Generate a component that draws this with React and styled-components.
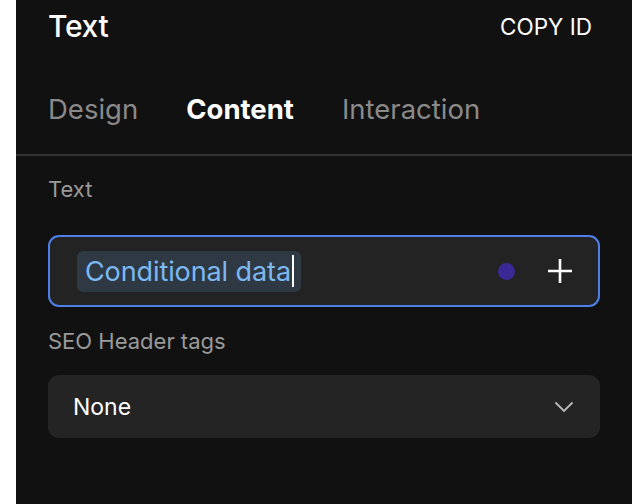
import React from 'react';
import styled, { createGlobalStyle } from 'styled-components';

const Global = createGlobalStyle`
  html, body { margin: 0; padding: 0; background: #ffffff; }
  body { font-family: Inter, "Noto Sans", sans-serif; }
`;

const Page = styled.div`
  display: flex;
  width: 632px;
  height: 504px;
  overflow: hidden;
`;

const Gutter = styled.div`
  width: 16px;
  flex-shrink: 0;
  background: #ffffff;
`;

const Panel = styled.div`
  flex: 1;
  background: #111111;
  display: flex;
  flex-direction: column;
`;

const Header = styled.div`
  display: flex;
  justify-content: space-between;
  align-items: center;
  padding: 4px 40px 0 32px;
  height: 44px;
`;

const Title = styled.h1`
  margin: 0;
  font-size: 30px;
  font-weight: 500;
  color: #ffffff;
  letter-spacing: -0.3px;
`;

const CopyButton = styled.button`
  background: none;
  border: none;
  padding: 0;
  font-family: inherit;
  font-size: 22.5px;
  font-weight: 400;
  color: #ffffff;
`;

const Tabs = styled.div`
  display: flex;
  gap: 48px;
  padding: 16px 32px 0 32px;
  height: 108px;
  align-items: center;
  border-bottom: 2px solid #333333;
  box-sizing: border-box;
`;

const Tab = styled.span`
  font-size: 27.5px;
  font-weight: ${p => (p.active ? 700 : 400)};
  color: ${p => (p.active ? '#ffffff' : '#8a8a8a')};
`;

const Body = styled.div`
  display: flex;
  flex-direction: column;
  padding: 20px 32px 0 32px;
`;

const Label = styled.div`
  font-size: 22px;
  color: #9a9a9a;
  line-height: 26px;
  margin-top: ${p => p.gap || 0}px;
`;

const InputBox = styled.div`
  margin-top: 33px;
  height: 72px;
  box-sizing: border-box;
  border: 2px solid #4f7fe8;
  border-radius: 11px;
  background: #232323;
  display: flex;
  align-items: center;
  padding: 0 24px 0 27px;
`;

const Chip = styled.span`
  display: inline-flex;
  align-items: center;
  height: 41px;
  padding: 0 7px 0 8px;
  border-radius: 6px;
  background: #2e3944;
  color: #7cb9f2;
  font-size: 27px;
  letter-spacing: -0.1px;
`;

const Caret = styled.span`
  width: 2px;
  height: 32px;
  background: #ffffff;
  margin-left: 1px;
`;

const Dot = styled.span`
  margin-left: auto;
  width: 17px;
  height: 17px;
  border-radius: 50%;
  background: #3b2996;
`;

const PlusIcon = styled.svg`
  margin-left: 31px;
  width: 28px;
  height: 28px;
`;

const SelectBox = styled.div`
  margin-top: 21px;
  height: 63px;
  border-radius: 11px;
  background: #242424;
  display: flex;
  align-items: center;
  justify-content: space-between;
  padding: 0 26px 0 25px;
`;

const SelectValue = styled.span`
  font-size: 23px;
  color: #ffffff;
`;

export default function App() {
  return (
    <>
      <Global />
      <Page>
        <Gutter />
        <Panel>
          <Header>
            <Title>Text</Title>
            <CopyButton>COPY ID</CopyButton>
          </Header>
          <Tabs>
            <Tab>Design</Tab>
            <Tab active>Content</Tab>
            <Tab>Interaction</Tab>
          </Tabs>
          <Body>
            <Label>Text</Label>
            <InputBox>
              <Chip>
                Conditional data
                <Caret />
              </Chip>
              <Dot />
              <PlusIcon viewBox="0 0 28 28">
                <path d="M14 2v24M2 14h24" stroke="#ffffff" strokeWidth="2.6" fill="none" />
              </PlusIcon>
            </InputBox>
            <Label gap={21}>SEO Header tags</Label>
            <SelectBox>
              <SelectValue>None</SelectValue>
              <svg width="20" height="12" viewBox="0 0 20 12">
                <path d="M1.5 1.5l8.5 8.5 8.5-8.5" stroke="#bbbbbb" strokeWidth="1.8" fill="none" />
              </svg>
            </SelectBox>
          </Body>
        </Panel>
      </Page>
    </>
  );
}
